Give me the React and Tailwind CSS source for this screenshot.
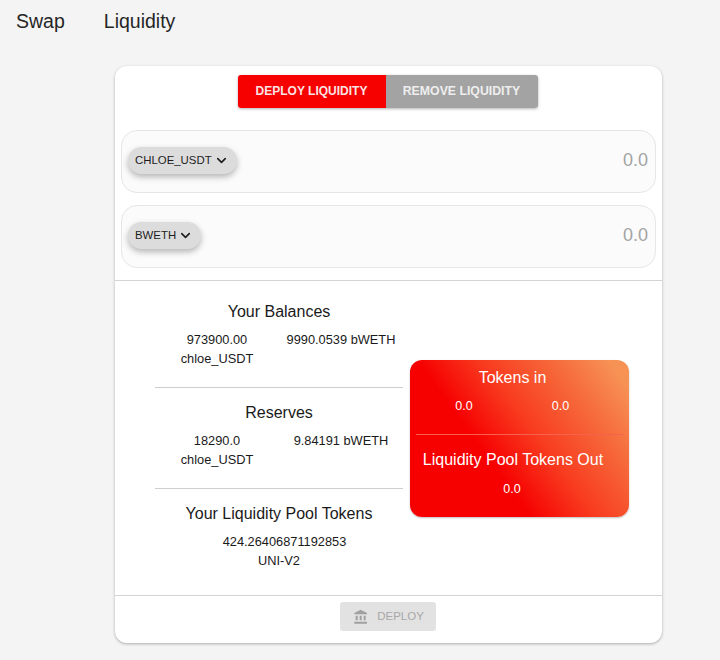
import React from "react";
import { ChevronDown } from "lucide-react";

const TokenInput = ({ name }) => {
  return (
    <div className="h-[63px] mx-[6px] flex items-center justify-between pb-[2px] pl-[6px] pr-[7px] rounded-[16px] border border-[#e6e6e6] bg-[#fbfbfb]">
      <button className="h-[27px] pl-[7px] pr-[8px] flex items-center gap-[2px] rounded-full bg-[#dcdcdc] text-[11.4px] text-[#1c1c1c] shadow-[0_3px_6px_rgba(0,0,0,0.28)]">
        {name}
        <ChevronDown size={15} strokeWidth={2.5} />
      </button>
      <span className="text-[18px] text-[#a3a3a3]">0.0</span>
    </div>
  );
};

const Stats = ({ title, left, right }) => {
  return (
    <div className="text-center text-[#1a1a1a]">
      <div className="text-[16px] leading-[20px]">{title}</div>
      <div className="flex mt-[8px] text-[12.8px] leading-[19px]">
        <div className="w-[124px]">
          <div>{left}</div>
          <div>chloe_USDT</div>
        </div>
        <div className="w-[124px]">{right}</div>
      </div>
    </div>
  );
};

const App = () => {
  return (
    <div className="w-[720px] h-[660px] overflow-hidden bg-[#f4f4f4] font-['Liberation_Sans',Arial,sans-serif]">
      <nav className="h-[66px] flex gap-[39px] pl-[16px] pt-[9px] text-[19.5px] leading-[24px] text-[#262626]">
        <span>Swap</span>
        <span>Liquidity</span>
      </nav>

      <div className="ml-[115px] w-[547px] h-[577px] flex flex-col bg-white rounded-[12px] shadow-[0_1px_3px_rgba(0,0,0,0.3)]">
        <div className="flex justify-center pt-[9px] pr-[2px]">
          <div className="flex h-[33px] text-center leading-[33px] font-bold shadow-[0_1px_3px_rgba(0,0,0,0.3)] rounded-[3px]">
            <div className="w-[148px] bg-[#f60000] text-[12px] text-[#fbe3e3] rounded-l-[3px]">DEPLOY LIQUIDITY</div>
            <div className="w-[152px] bg-[#a3a3a3] text-[12.3px] text-[#eeeeee] rounded-r-[3px]">REMOVE LIQUIDITY</div>
          </div>
        </div>

        <div className="mt-[22px] flex flex-col gap-[12px]">
          <TokenInput name="CHLOE_USDT" />
          <TokenInput name="BWETH" />
        </div>

        <div className="mt-[12px] border-t border-[#d4d4d4] h-[315px] flex pl-[40px] pt-[21px]">
          <div className="w-[248px]">
            <Stats title="Your Balances" left="973900.00" right="9990.0539 bWETH" />
            <div className="mt-[19px] border-t border-[#cfcfcf]" />
            <div className="mt-[15px]">
              <Stats title="Reserves" left="18290.0" right="9.84191 bWETH" />
            </div>
            <div className="mt-[19px] border-t border-[#cfcfcf]" />
            <div className="mt-[15px] text-center text-[#1a1a1a]">
              <div className="text-[16px] leading-[20px]">Your Liquidity Pool Tokens</div>
              <div className="mt-[8px] text-[12.8px] leading-[19px]">
                <div className="pl-[11px]">424.26406871192853</div>
                <div>UNI-V2</div>
              </div>
            </div>
          </div>

          <div className="ml-[7px] mt-[58px] w-[219px] h-[157px] rounded-[12px] text-white text-center bg-[linear-gradient(234deg,#f79255_6%,#f6683a_24%,#f83c20_44%,#f60000_64%,#f60000_100%)] shadow-[0_1px_2px_rgba(0,0,0,0.25)]">
            <div className="mt-[8px] pr-[14px] text-[16px] leading-[20px]">Tokens in</div>
            <div className="flex mt-[10px] text-[12.5px] leading-[16px]">
              <div className="w-[108px]">0.0</div>
              <div className="w-[85px]">0.0</div>
            </div>
            <div className="mt-[20px] mx-[6px] border-t border-[#f8614f]" />
            <div className="mt-[15px] pr-[13px] text-[16px] leading-[20px]">Liquidity Pool Tokens Out</div>
            <div className="mt-[11px] pr-[15px] text-[12.5px] leading-[16px]">0.0</div>
          </div>
        </div>

        <div className="border-t border-[#d4d4d4] flex justify-center pt-[6px] pr-[2px]">
          <button className="w-[96px] h-[29px] flex items-center justify-center gap-[8px] pl-[2px] rounded-[3px] bg-[#e2e2e2] text-[11.5px] text-[#a8a8a8]">
            <svg width="16" height="16" viewBox="0 0 24 24" fill="#a0a0a0">
              <path d="M4 10v7h3v-7H4zm6 0v7h3v-7h-3zM2 22h19v-3H2v3zm14-12v7h3v-7h-3zm-4.5-9L2 6v2h19V6l-9.5-5z" />
            </svg>
            DEPLOY
          </button>
        </div>
      </div>
    </div>
  );
};

export default App;
